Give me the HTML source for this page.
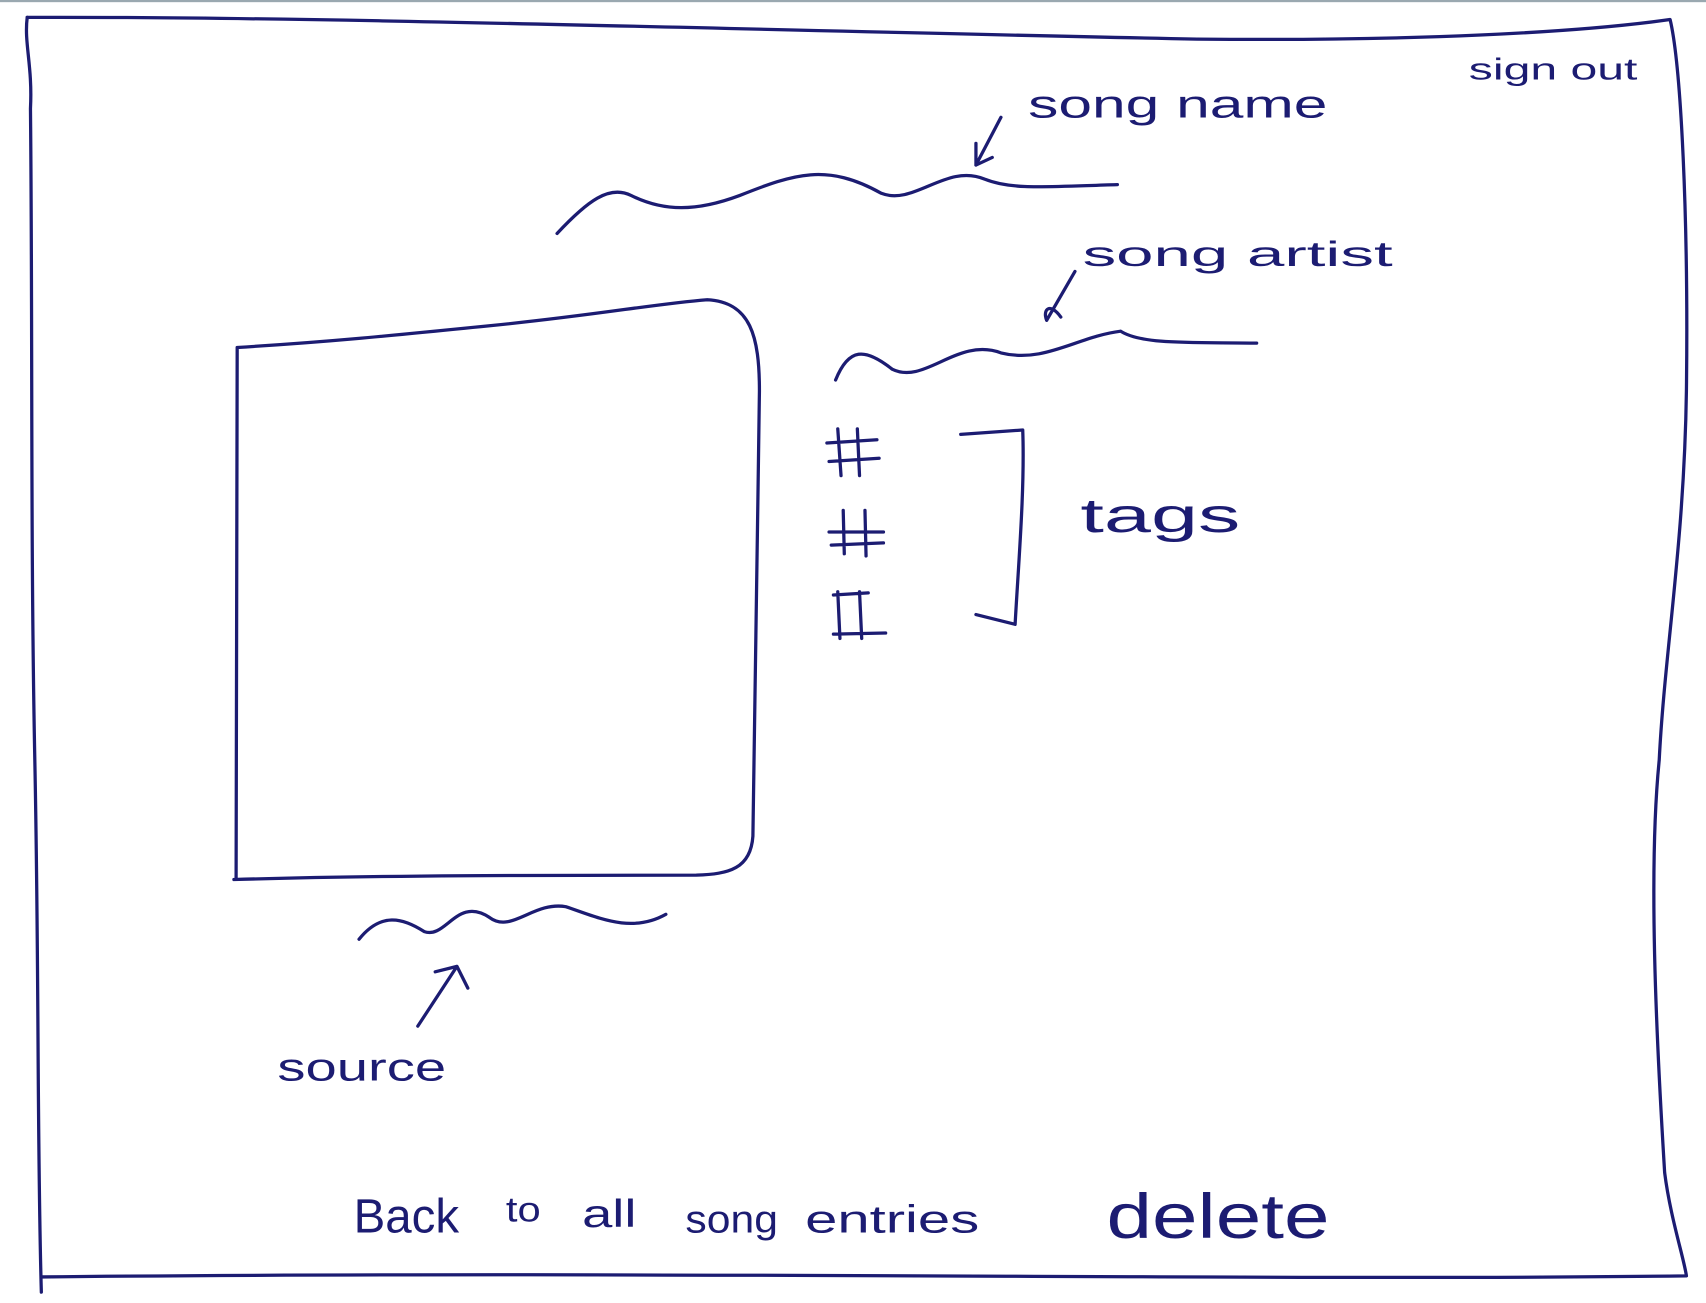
<!DOCTYPE html>
<html><head><meta charset="utf-8"><style>
html,body{margin:0;padding:0;background:#fff;width:1706px;height:1303px;overflow:hidden}
svg{display:block}
text{font-family:"Liberation Sans",sans-serif;fill:#1c1c72}
</style></head><body>
<svg width="1706" height="1303" viewBox="0 0 1568 1200" preserveAspectRatio="none">
<rect x="0" y="0" width="1568" height="2" fill="#9aa8b0"/>
<g fill="none" stroke="#1c1c72" stroke-width="3" stroke-linecap="round" stroke-linejoin="round">
<path d="M25 16 C300 15 700 28 1100 36 C1300 38 1450 30 1535 18 C1545 60 1552 200 1550 360 C1548 500 1530 600 1525 700 C1515 800 1522 950 1530 1080 C1535 1120 1548 1160 1550 1175 C1200 1180 600 1170 38 1176"/>
<path d="M25 16 C22 40 30 60 28 100 C30 300 28 500 32 700 C36 900 34 1050 38 1190"/>
<path d="M512 215 C540 185 560 170 580 180 C610 195 640 195 680 180 C730 160 760 150 810 178 C840 190 870 150 905 165 C930 175 960 172 1027 170"/>
<path d="M920 108 L897 152 M897 152 L897 132 M897 152 L912 145"/>
<path d="M768 350 C780 320 795 320 820 340 C850 355 880 310 920 325 C960 335 990 310 1030 305 C1050 318 1100 315 1155 316"/>
<path d="M988 250 L962 295 M962 295 C958 285 965 278 975 292"/>
<path d="M218 320 C300 315 350 310 450 300 C550 290 600 280 650 276 C690 278 698 310 698 360 C696 500 694 650 692 770 C690 800 670 805 640 806 C500 806 350 806 215 810 M218 320 L217 810"/>
<path d="M330 865 C350 840 370 845 390 858 C410 865 420 825 450 845 C470 860 490 830 520 835 C550 845 580 860 612 842"/>
<path d="M384 945 L420 890 M400 895 L420 890 L430 910"/>
<path d="M883 400 L940 396 C942 450 936 520 933 575 L897 566"/>
<path d="M770 395 L773 438 M788 395 L790 438 M760 408 L806 405 M762 425 L808 422"/>
<path d="M775 470 L776 510 M795 470 L796 512 M762 490 L812 490 M764 502 L812 500"/>
<path d="M770 545 L772 588 M790 545 L792 588 M766 548 L798 546 M766 584 L814 583"/>
</g>
<text x="945" y="108" font-size="36" textLength="275" lengthAdjust="spacingAndGlyphs">song name</text>
<text x="1350" y="73" font-size="28" textLength="155" lengthAdjust="spacingAndGlyphs">sign out</text>
<text x="995" y="245" font-size="32" textLength="285" lengthAdjust="spacingAndGlyphs">song artist</text>
<text x="993" y="490" font-size="44" textLength="147" lengthAdjust="spacingAndGlyphs">tags</text>
<text x="255" y="995" font-size="36" textLength="155" lengthAdjust="spacingAndGlyphs">source</text>
<text x="325" y="1135" font-size="44" textLength="97" lengthAdjust="spacingAndGlyphs">Back</text>
<text x="465" y="1125" font-size="32" textLength="32" lengthAdjust="spacingAndGlyphs">to</text>
<text x="535" y="1130" font-size="36" textLength="50" lengthAdjust="spacingAndGlyphs">all</text>
<text x="630" y="1135" font-size="36" textLength="85" lengthAdjust="spacingAndGlyphs">song</text>
<text x="740" y="1135" font-size="36" textLength="160" lengthAdjust="spacingAndGlyphs">entries</text>
<text x="1017" y="1140" font-size="58" textLength="205" lengthAdjust="spacingAndGlyphs">delete</text>
</svg>
</body></html>
